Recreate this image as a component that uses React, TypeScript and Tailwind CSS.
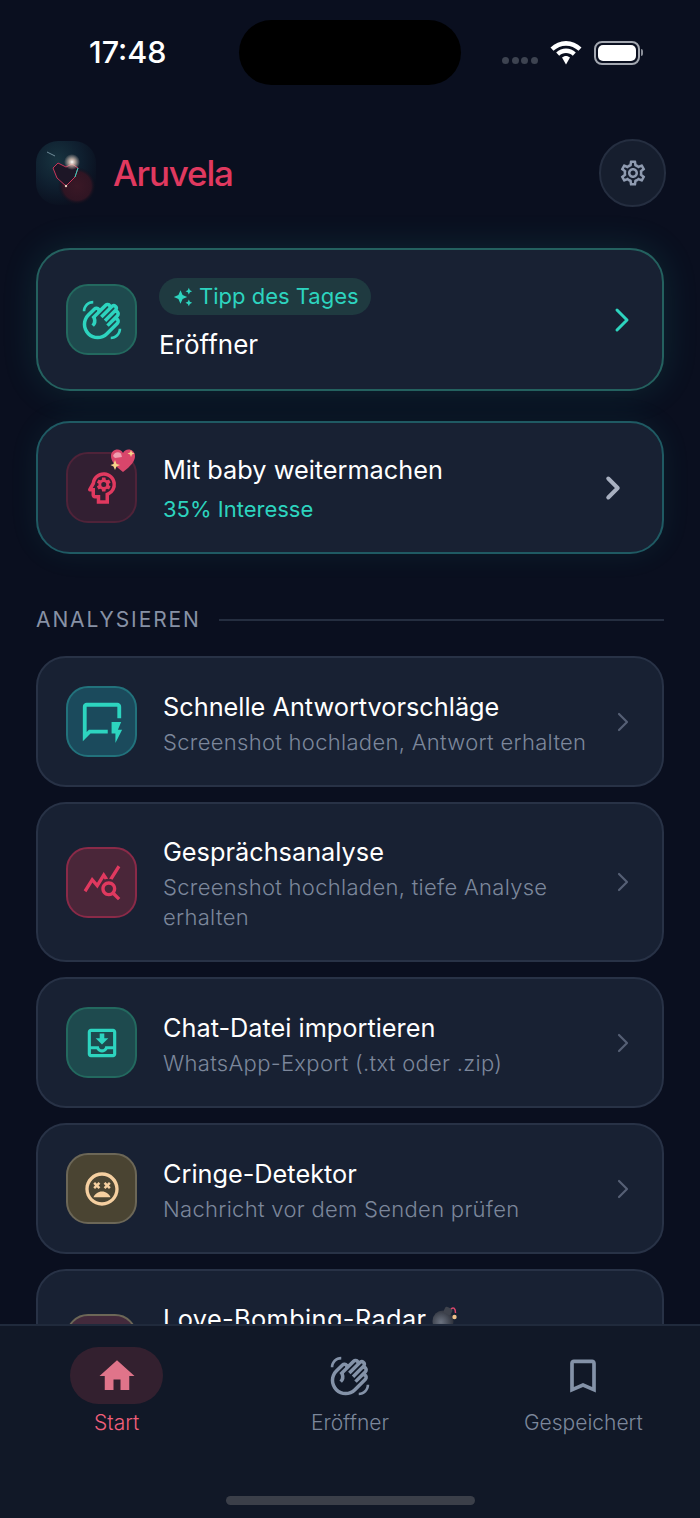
import type { ReactNode } from "react";
import { MdOutlineWavingHand, MdOutlinePsychology, MdOutlineQuickreply, MdOutlineQueryStats, MdOutlineMoveToInbox, MdOutlineSentimentVeryDissatisfied, MdHome, MdOutlineBookmarkBorder, MdOutlineSettings, MdAutoAwesome } from "react-icons/md";
import { LuChevronRight } from "react-icons/lu";

const FONT = "font-['Inter','Liberation_Sans',sans-serif]";

function Logo() {
  return (
    <svg width="60" height="64" viewBox="0 0 60 64" className="shrink-0">
      <defs>
        <radialGradient id="logoBg" cx="35%" cy="30%" r="75%">
          <stop offset="0" stopColor="#17333f" />
          <stop offset="0.55" stopColor="#0f1f2f" />
          <stop offset="1" stopColor="#0a0f1e" />
        </radialGradient>
        <radialGradient id="logoRed" cx="50%" cy="50%" r="50%">
          <stop offset="0" stopColor="#3a1826" />
          <stop offset="0.75" stopColor="#301523" />
          <stop offset="1" stopColor="#0a0f1e" stopOpacity="0" />
        </radialGradient>
        <radialGradient id="logoStar" cx="50%" cy="50%" r="50%">
          <stop offset="0" stopColor="#fff" />
          <stop offset="0.35" stopColor="#e8cfc0" stopOpacity="0.8" />
          <stop offset="1" stopColor="#e8cfc0" stopOpacity="0" />
        </radialGradient>
      </defs>
      <rect x="0" y="0" width="60" height="64" rx="22" fill="url(#logoBg)" />
      <ellipse cx="41" cy="45" rx="19" ry="19" fill="url(#logoRed)" />
      <path d="M11 11 L19 15" stroke="#6f8c99" strokeWidth="1" />
      <path d="M22 22 L17 27 L21 37 L30 45 L39 36 L42 27 L36 23 L30 26 Z" fill="#1d1626" stroke="#c9365a" strokeWidth="1" />
      <path d="M42 27 L39 36" fill="none" stroke="#2dd4bf" strokeWidth="1" />
      <circle cx="36" cy="21" r="8" fill="url(#logoStar)" />
      <circle cx="30" cy="45" r="1.200" fill="#e8cfc0" />
    </svg>
  );
}

function BattWifi() {
  return (
    <div className="flex items-center ml-[12px]">
      <svg width="32" height="24" viewBox="0 0 32 24" fill="#fff">
        <path d="M16 0C10 0 5 2.300 0.500 6.500L3.500 9.800C7 6.500 11.300 4.700 16 4.700S25 6.500 28.500 9.800L31.500 6.500C27 2.300 22 0 16 0Z" />
        <path d="M16 7.500C12.300 7.500 9 8.900 6.200 11.500L9.200 14.700C11 13 13.300 12 16 12S21 13 22.800 14.700L25.800 11.500C23 8.900 19.700 7.500 16 7.500Z" />
        <path d="M16 15C14.500 15 13.200 15.500 12 16.600L16 23.500L20 16.600C18.800 15.500 17.500 15 16 15Z" />
      </svg>
      <div className="ml-[12px] w-[46px] h-[24px] rounded-[8px] border-2 border-[#a3a7b0] p-[2px]">
        <div className="w-full h-full rounded-[5px] bg-white" />
      </div>
      <div className="w-[2px] h-[7px] ml-[1px] rounded-r-full bg-[#8a8e98]" />
    </div>
  );
}

function StatusBar() {
  return (
    <div className="flex h-[85px] pt-[20px]">
      <div className="w-[239px] pl-[89px] flex items-center">
        <span className="text-[30.500px] font-medium leading-none text-white">17:48</span>
      </div>
      <div className="w-[222px] h-[65px] rounded-full bg-black" />
      <div className="flex items-center pl-[41px]">
        <div className="flex gap-[2.500px] mt-[15px]">
          <span className="w-[7px] h-[7px] rounded-full bg-[#3d4350]" />
          <span className="w-[7px] h-[7px] rounded-full bg-[#3d4350]" />
          <span className="w-[7px] h-[7px] rounded-full bg-[#3d4350]" />
          <span className="w-[7px] h-[7px] rounded-full bg-[#3d4350]" />
        </div>
        <BattWifi />
      </div>
    </div>
  );
}

function IconBox({ cls, children }: { cls: string; children: ReactNode }) {
  return (
    <div className={`relative shrink-0 flex items-center justify-center w-[71px] h-[71px] rounded-[22px] border-2 ${cls}`}>
      {children}
    </div>
  );
}

function SparkleHeart() {
  return (
    <svg width="26" height="24" viewBox="0 0 26 24" className="absolute -top-[5px] -right-[1px]">
      <path d="M13 23 C5 17 1 12 1 7 C1 3 4 0.500 7.500 0.500 C10 0.500 12 2 13 4 C14 2 16 0.500 18.500 0.500 C22 0.500 25 3 25 7 C25 12 21 17 13 23Z" fill="#d9466b" />
      <path d="M3 7 C4 3.500 8 2 11 4.500 L12 8 L5 9Z" fill="#ee9fb0" />
      <path d="M5 11 L6.500 15 L10 16 L6.500 17.500 L5 21 L3.500 17.500 L0.500 16 L3.500 15Z" fill="#f7d48a" />
      <path d="M21 1 L22 3.500 L24.500 4.500 L22 5.500 L21 8 L20 5.500 L17.500 4.500 L20 3.500Z" fill="#f7d48a" />
    </svg>
  );
}

function Bomb() {
  return (
    <svg width="28" height="28" viewBox="0 0 28 28" className="inline-block ml-[6px] align-[-6px]">
      <defs>
        <radialGradient id="bombFill" cx="40%" cy="55%" r="60%">
          <stop offset="0" stopColor="#6b7280" />
          <stop offset="1" stopColor="#2e323c" />
        </radialGradient>
      </defs>
      <circle cx="11" cy="15" r="10.500" fill="url(#bombFill)" />
      <rect x="12" y="1.500" width="8" height="7" rx="2" fill="#3f434d" transform="rotate(25 16 5)" />
      <path d="M19 3 C21.500 1 23.500 2 23.500 7" stroke="#d9466b" strokeWidth="1.500" fill="none" />
      <circle cx="22.500" cy="11" r="2.200" fill="#eec28a" />
    </svg>
  );
}

const analyseItems = [
  {
    title: "Schnelle Antwortvorschläge",
    sub: "Screenshot hochladen, Antwort erhalten",
    box: "bg-[#1b4a5c] border-[#22727c]",
    icon: <MdOutlineQuickreply size={46} color="#2dd4bf" />,
  },
  {
    title: "Gesprächsanalyse",
    sub: "Screenshot hochladen, tiefe Analyse erhalten",
    box: "bg-[#4a2639] border-[#8a2a48]",
    icon: <MdOutlineQueryStats size={40} color="#e0395f" />,
  },
  {
    title: "Chat-Datei importieren",
    sub: "WhatsApp-Export (.txt oder .zip)",
    box: "bg-[#1e4a4e] border-[#23695f]",
    icon: <MdOutlineMoveToInbox size={38} color="#2dd4bf" />,
  },
  {
    title: "Cringe-Detektor",
    sub: "Nachricht vor dem Senden prüfen",
    box: "bg-[#4a4432] border-[#6c6757]",
    icon: <MdOutlineSentimentVeryDissatisfied size={40} color="#f5cfa0" />,
  },
];

function AnalyseRow({ title, sub, box, icon }: (typeof analyseItems)[number]) {
  return (
    <div className="flex items-center rounded-[30px] border-2 border-[#283246] bg-[#182133] pl-[28px] pr-[23px] py-[28px]">
      <IconBox cls={box}>{icon}</IconBox>
      <div className="flex-1 ml-[26px]">
        <div className="text-[25.300px] leading-[40px] font-[430] text-white">{title}</div>
        <div className="text-[22px] leading-[30px] tracking-[0.300px] font-light text-[#7c879b]">{sub}</div>
      </div>
      <LuChevronRight size={32} strokeWidth={1.6} color="#566075" className="shrink-0 ml-[16px]" />
    </div>
  );
}

function Tab({ active, label, children }: { active?: boolean; label: string; children: ReactNode }) {
  return (
    <div className="flex-1 flex flex-col items-center">
      <div className={`flex items-center justify-center w-[93px] h-[57px] rounded-full ${active ? "bg-[#33202f]" : ""}`}>
        {children}
      </div>
      <span className={`mt-[5px] text-[21px] leading-[28px] font-light ${active ? "text-[#ef5f7a]" : "text-[#7c879b]"}`}>{label}</span>
    </div>
  );
}

export default function App() {
  return (
    <div className={`flex flex-col h-[1518px] overflow-hidden bg-[#0a0f1f] ${FONT}`}>
      <StatusBar />

      <main className="flex-1 min-h-0 overflow-hidden px-[36px]">
        {/* Header */}
        <div className="flex items-center justify-between pt-[54px]">
          <div className="flex items-center gap-[17px]">
            <Logo />
            <span className="text-[35px] font-[450] tracking-[-1.200px] text-[#e0395f]">Aruvela</span>
          </div>
          <div className="flex items-center justify-center w-[67px] h-[68px] rounded-full border-2 border-[#252e40] bg-[#161e2e] mr-[-2px]">
            <MdOutlineSettings size={30} color="#8f9bb0" />
          </div>
        </div>

        {/* Tip of the day */}
        <div className="flex items-center mt-[41px] h-[143px] rounded-[34px] border-2 border-[#24615f] bg-[#182133] pl-[28px] pr-[20px] shadow-[0_0_36px_rgba(45,212,191,0.13)]">
          <IconBox cls="bg-[#1e4a4e] border-[#23695f]">
            <MdOutlineWavingHand size={42} color="#2dd4bf" />
          </IconBox>
          <div className="flex-1 ml-[22px] pt-[2px]">
            <div className="inline-flex items-center gap-[6px] h-[37px] rounded-full bg-[#1f3a40] pl-[14px] pr-[12px] text-[22px] text-[#2dd4bf]">
              <MdAutoAwesome size={20} />
              Tipp des Tages
            </div>
            <div className="mt-[12px] text-[26px] leading-[36px] font-[430] text-white">Eröffner</div>
          </div>
          <LuChevronRight size={40} strokeWidth={1.800} color="#2dd4bf" />
        </div>

        {/* Continue */}
        <div className="flex items-center mt-[30px] h-[133px] rounded-[34px] border-2 border-[#1f5a63] bg-[#182133] pl-[28px] pr-[30px] shadow-[0_0_30px_rgba(45,212,191,0.08)]">
          <IconBox cls="bg-[#321f32] border-[#4f2339]">
            <MdOutlinePsychology size={42} color="#e0395f" />
            <SparkleHeart />
          </IconBox>
          <div className="flex-1 ml-[26px] pt-[3px]">
            <div className="text-[25.300px] leading-[40px] font-[430] text-white">Mit baby weitermachen</div>
            <div className="text-[22px] leading-[38px] text-[#2dd4bf]">35% Interesse</div>
          </div>
          <LuChevronRight size={38} strokeWidth={2.500} color="#a8b0c0" />
        </div>

        {/* Section label */}
        <div className="flex items-center mt-[50px] gap-[18px]">
          <span className="text-[21px] leading-[31px] tracking-[1.900px] font-normal text-[#8791a5]">ANALYSIEREN</span>
          <div className="flex-1 h-[2px] bg-[#252e40]" />
        </div>

        <div className="flex flex-col gap-[15px] mt-[21px]">
          {analyseItems.map((item) => (
            <AnalyseRow key={item.title} {...item} />
          ))}
          <div className="flex items-center h-[160px] rounded-[30px] border-2 border-[#283246] bg-[#182133] pl-[28px] pr-[23px] py-[28px]">
            <IconBox cls="bg-[#432a3c] border-[#6c6757]">
              <span />
            </IconBox>
            <div className="self-start flex-1 ml-[26px]">
              <div className="text-[25.300px] leading-[40px] tracking-[0.400px] font-[430] text-white">
                Love-Bombing-Radar
                <Bomb />
              </div>
            </div>
          </div>
        </div>
      </main>

      {/* Tab bar */}
      <nav className="flex flex-col h-[194px] border-t-2 border-[#202a3c] bg-[#111827] pt-[21px]">
        <div className="flex">
          <Tab active label="Start">
            <MdHome size={42} color="#e0748a" />
          </Tab>
          <Tab label="Eröffner">
            <MdOutlineWavingHand size={42} color="#8492a8" />
          </Tab>
          <Tab label="Gespeichert">
            <MdOutlineBookmarkBorder size={44} color="#8492a8" />
          </Tab>
        </div>
        <div className="mt-auto mb-[13px] self-center w-[249px] h-[9px] rounded-full bg-[#3b3f49]" />
      </nav>
    </div>
  );
}
